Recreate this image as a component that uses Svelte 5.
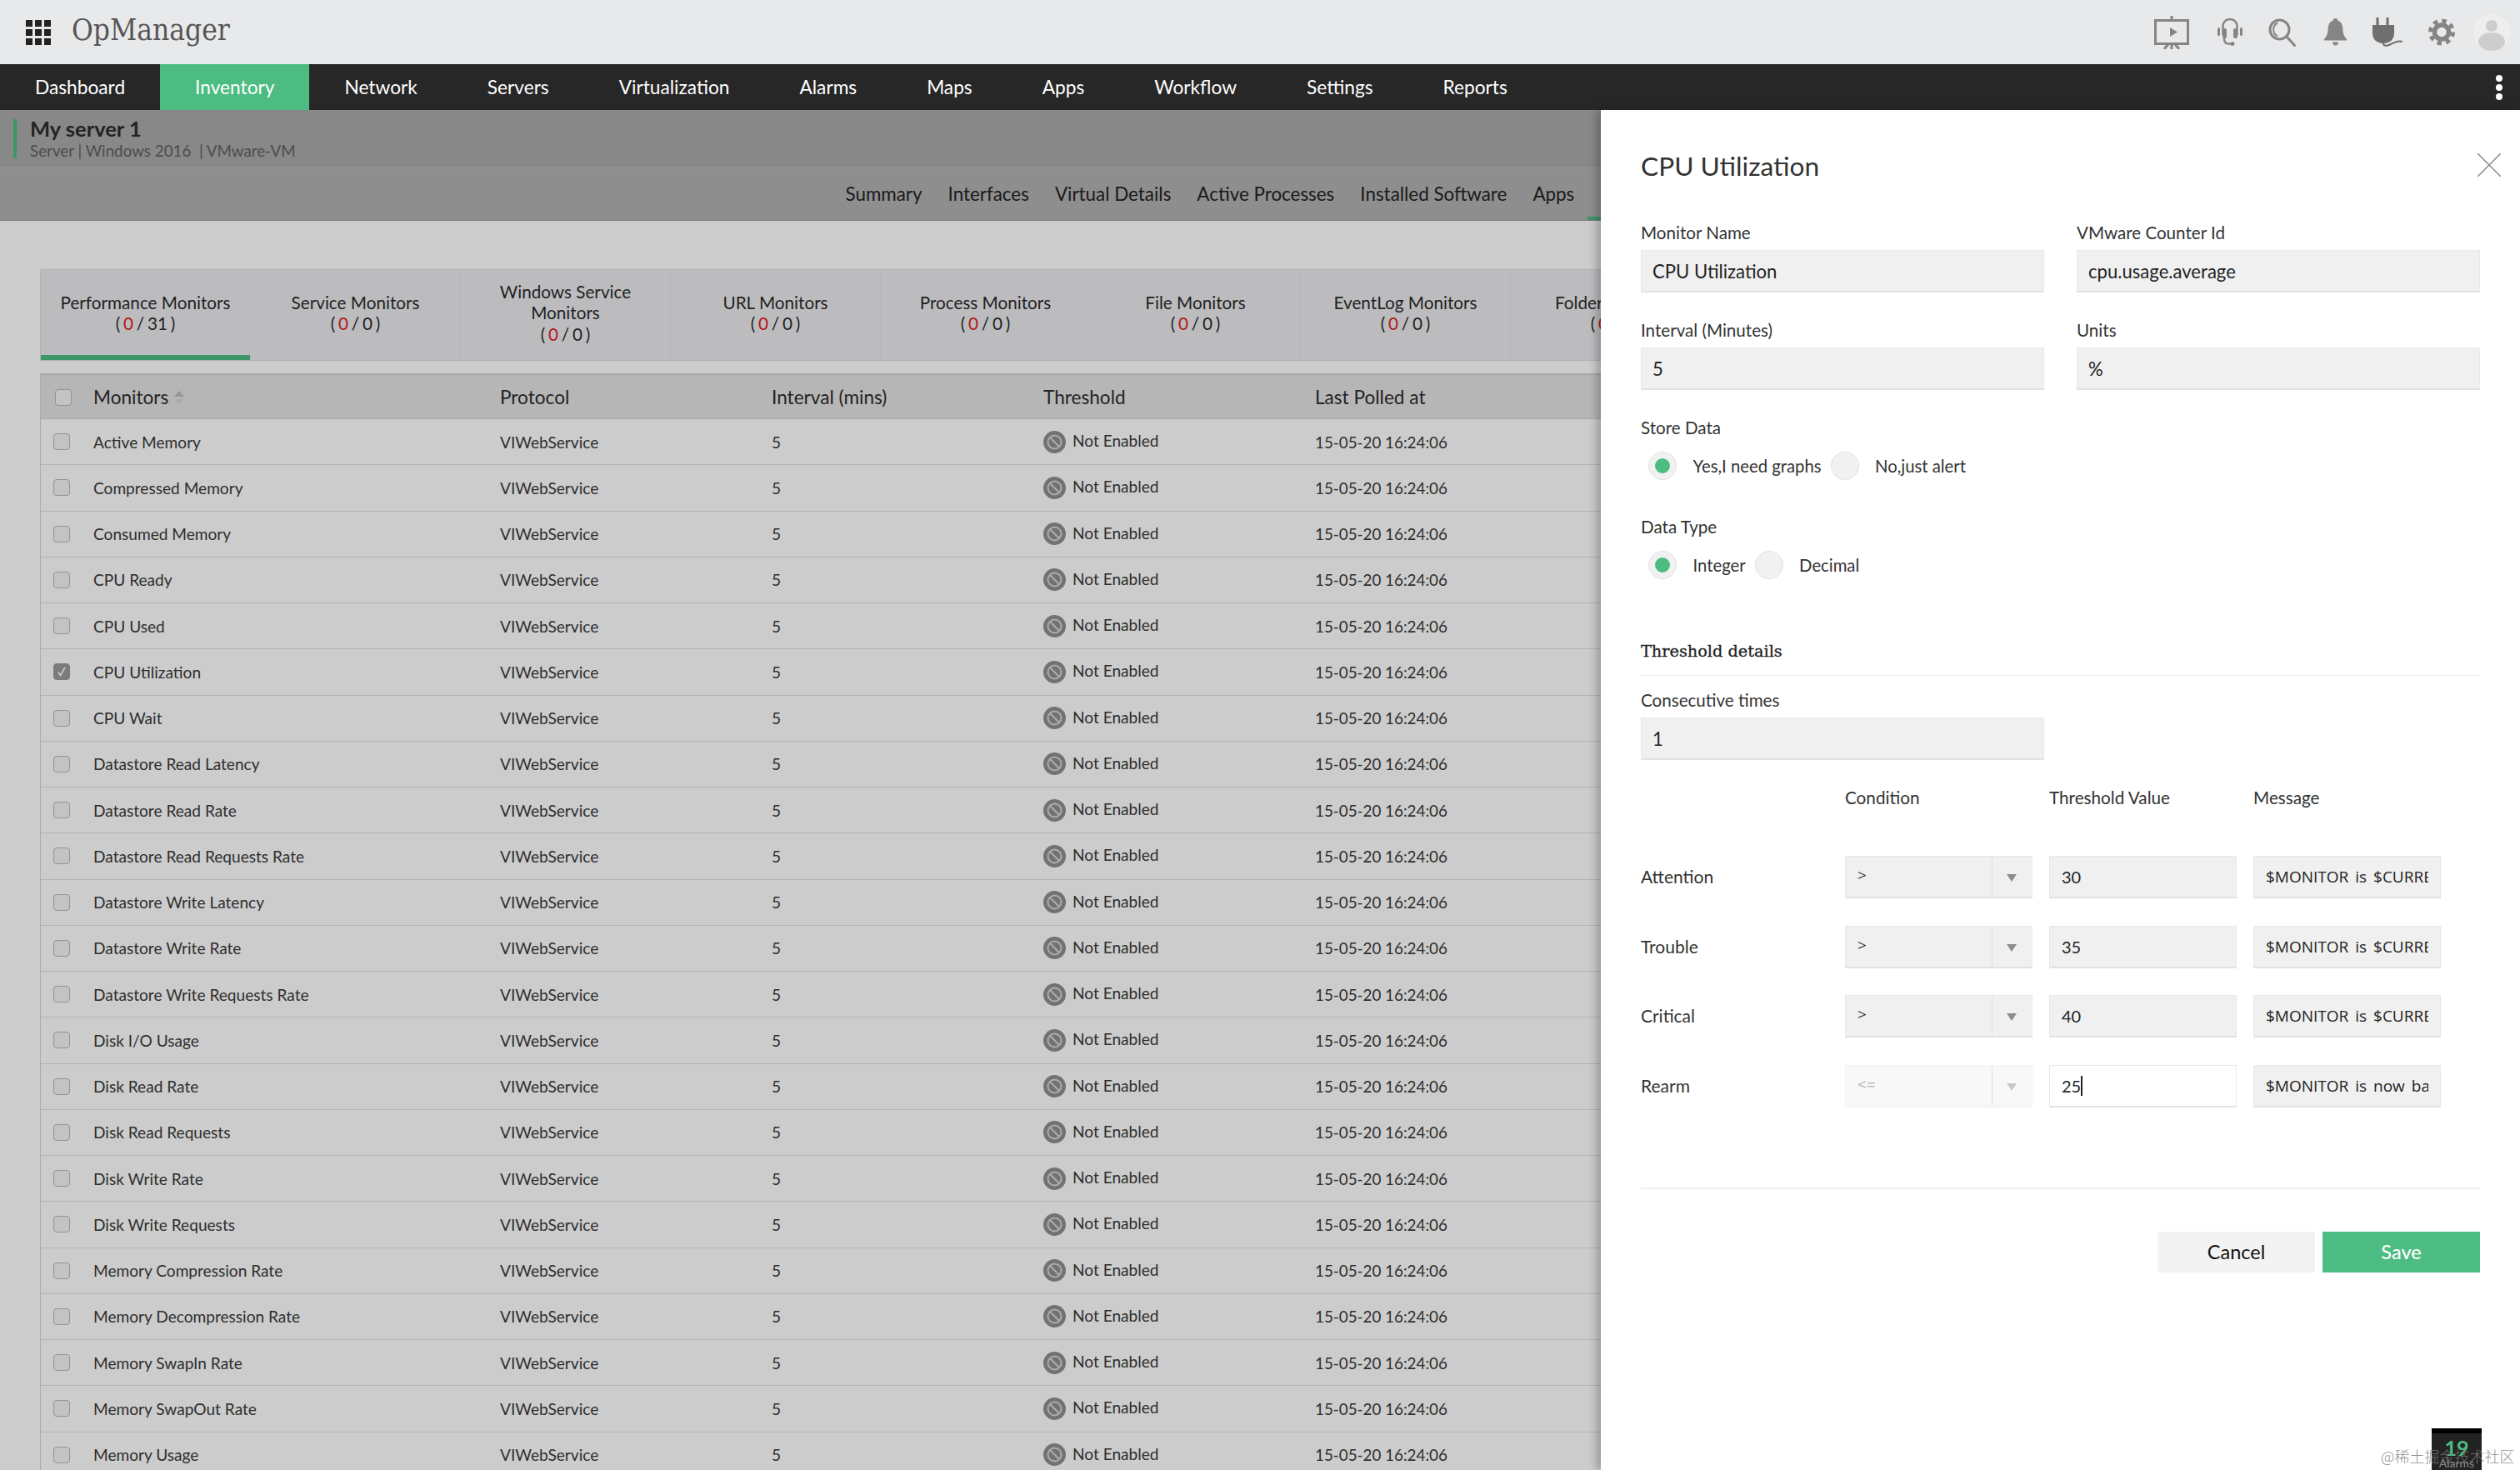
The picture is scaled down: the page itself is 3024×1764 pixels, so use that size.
<script>
  const navItems = ['Dashboard', 'Inventory', 'Network', 'Servers', 'Virtualization', 'Alarms', 'Maps', 'Apps', 'Workflow', 'Settings', 'Reports'];
  const subTabs = ['Summary', 'Interfaces', 'Virtual Details', 'Active Processes', 'Installed Software', 'Apps', 'Monitors'];
  const monitorTabs = [
    { lines: ['Performance Monitors'], total: 31 },
    { lines: ['Service Monitors'], total: 0 },
    { lines: ['Windows Service', 'Monitors'], total: 0 },
    { lines: ['URL Monitors'], total: 0 },
    { lines: ['Process Monitors'], total: 0 },
    { lines: ['File Monitors'], total: 0 },
    { lines: ['EventLog Monitors'], total: 0 },
    { lines: ['Folder Monitors'], total: 0 }
  ];
  const monitors = [
    'Active Memory', 'Compressed Memory', 'Consumed Memory', 'CPU Ready', 'CPU Used', 'CPU Utilization', 'CPU Wait',
    'Datastore Read Latency', 'Datastore Read Rate', 'Datastore Read Requests Rate', 'Datastore Write Latency',
    'Datastore Write Rate', 'Datastore Write Requests Rate', 'Disk I/O Usage', 'Disk Read Rate', 'Disk Read Requests',
    'Disk Write Rate', 'Disk Write Requests', 'Memory Compression Rate', 'Memory Decompression Rate',
    'Memory SwapIn Rate', 'Memory SwapOut Rate', 'Memory Usage'
  ];
  const thresholds = [
    { name: 'Attention', cond: '>', value: '30', message: '$MONITOR is $CURRENT_VALUE' },
    { name: 'Trouble', cond: '>', value: '35', message: '$MONITOR is $CURRENT_VALUE' },
    { name: 'Critical', cond: '>', value: '40', message: '$MONITOR is $CURRENT_VALUE' },
    { name: 'Rearm', cond: '<=', value: '25', message: '$MONITOR is now back to normal', rearm: true }
  ];
</script>

<div class="page">
  <header class="topbar">
    <div class="apps">
      {#each Array(9) as _}<span></span>{/each}
    </div>
    <div class="logo">OpManager</div>
    <div class="tools">
      <svg width="42" height="40" viewBox="0 0 42 40" fill="none" stroke="#858585" stroke-width="3">
        <rect x="1.5" y="5.5" width="39" height="28" />
        <path d="M21 0v5M21 34v6M12 40l5-6M30 40l-5-6" />
        <path d="M19 14v11l9-5.500z" fill="#858585" stroke="none" />
      </svg>
      <svg class="shift" width="30" height="34" viewBox="0 0 30 34" fill="none" stroke="#858585">
        <path d="M6.500 20V9.500a8.500 8.500 0 0 1 17 0V20" stroke-width="2.500" />
        <path d="M8 24c0 4 1.500 6.500 5 6.500h4" stroke-width="2.500" />
        <rect x="0" y="11" width="3" height="10" rx="1.500" fill="#858585" stroke="none" />
        <rect x="27" y="11" width="3" height="10" rx="1.500" fill="#858585" stroke="none" />
        <rect x="6" y="12" width="5" height="12" rx="2" fill="#858585" stroke="none" />
        <rect x="19" y="12" width="5" height="12" rx="2" fill="#858585" stroke="none" />
        <circle cx="18" cy="30.500" r="2.500" fill="#858585" stroke="none" />
      </svg>
      <svg width="33" height="34" viewBox="0 0 33 34" fill="none" stroke="#858585">
        <circle cx="13.500" cy="13.500" r="11.500" stroke-width="3" />
        <path d="M11 5.500a9 9 0 0 0 0 16" stroke-width="2" />
        <path d="M22 22l9.500 10.500" stroke-width="3" stroke-linecap="round" />
      </svg>
      <svg class="shift" width="27" height="33" viewBox="0 0 27 33" fill="#858585">
        <path d="M13.500 0c2 0 3 1.500 3.300 3 4 1.300 5.200 5 5.500 9 .3 5 1 9 4.700 13v1.500H0V25c3.700-4 4.400-8 4.700-13 .3-4 1.500-7.700 5.500-9 .3-1.500 1.300-3 3.300-3z" />
        <path d="M10 28.500h7c0 2.500-1.500 4-3.500 4s-3.500-1.500-3.500-4z" />
      </svg>
      <svg width="36" height="35" viewBox="0 0 36 35" fill="none">
        <path d="M6 0v9M18 0v9" stroke="#6f6f6f" stroke-width="3" />
        <path d="M0 9h26v10c0 7-5 12-13 12S0 26 0 19z" fill="#6f6f6f" />
        <path d="M13 31c0 4 5 3 9 1s8-5 14-3" stroke="#6f6f6f" stroke-width="2" />
      </svg>
      <svg width="32" height="33" viewBox="0 0 32 33" fill="none" stroke="#858585">
        <circle cx="16" cy="16.500" r="13.500" stroke-width="5" stroke-dasharray="5.300 5.300" />
        <circle cx="16" cy="16.500" r="8.500" stroke-width="5.500" />
      </svg>
      <svg class="avatar" width="44" height="44" viewBox="0 0 44 44">
        <circle cx="22" cy="22" r="22" fill="#eeeeef" />
        <circle cx="22" cy="14" r="7" fill="#cdcdcd" />
        <ellipse cx="22" cy="33" rx="16" ry="11" fill="#cdcdcd" />
      </svg>
    </div>
  </header>

  <nav class="mainnav">
    {#each navItems as item}
      <span class="navitem" class:active={item === 'Inventory'}>{item}</span>
    {/each}
    <span class="more"><i></i><i></i><i></i></span>
  </nav>

  <main class="content">
    <section class="device">
      <div class="device-name">My server 1</div>
      <div class="device-meta">Server | Windows 2016 &nbsp;| VMware-VM</div>
    </section>
    <div class="subtabs">
      {#each subTabs as tab}
        <span class="subtab" class:current={tab === 'Monitors'}>{tab}</span>
      {/each}
    </div>

    <div class="monitors">
      <div class="tabcard">
        {#each monitorTabs as tab, i}
          <div class="mtab" class:current={i === 0}>
            {#each tab.lines as line}<div>{line}</div>{/each}
            <div class="count">( <b>0</b> / {tab.total} )</div>
          </div>
        {/each}
      </div>

      <div class="table">
        <div class="row head">
          <span class="box"></span>
          <span class="sortable">Monitors<i class="sort"></i></span>
          <span>Protocol</span>
          <span>Interval (mins)</span>
          <span>Threshold</span>
          <span>Last Polled at</span>
        </div>
        {#each monitors as name}
          <div class="row">
            <span class="box" class:checked={name === 'CPU Utilization'}>
              {#if name === 'CPU Utilization'}
                <svg width="14" height="14" viewBox="0 0 14 14" fill="none" stroke="#fff" stroke-width="1.600"><path d="M3 7.500l2.500 4L11 2" /></svg>
              {/if}
            </span>
            <span>{name}</span>
            <span>VIWebService</span>
            <span>5</span>
            <span class="status">
              <svg width="27" height="27" viewBox="0 0 27 27" fill="none">
                <circle cx="13.500" cy="13.500" r="13.500" fill="#8f8f8f" />
                <circle cx="13.500" cy="13.500" r="8" stroke="#d8d8d8" stroke-width="2" />
                <path d="M8 8l11 11" stroke="#d8d8d8" stroke-width="2" />
              </svg>
              <span>Not Enabled</span>
            </span>
            <span class="polled">15-05-20 16:24:06</span>
          </div>
        {/each}
      </div>
    </div>
    <div class="scrim"></div>
  </main>

  <aside class="panel">
    <svg class="close" width="28" height="28" viewBox="0 0 28 28" stroke="#8a8a8a" stroke-width="1.500"><path d="M0 0l28 28M28 0L0 28" /></svg>
    <h1>CPU Utilization</h1>

    <div class="fields">
      <div>
        <div class="label">Monitor Name</div>
        <div class="input">CPU Utilization</div>
      </div>
      <div>
        <div class="label">VMware Counter Id</div>
        <div class="input">cpu.usage.average</div>
      </div>
      <div>
        <div class="label">Interval (Minutes)</div>
        <div class="input">5</div>
      </div>
      <div>
        <div class="label">Units</div>
        <div class="input">%</div>
      </div>
    </div>

    <div class="label store">Store Data</div>
    <div class="radios">
      <span class="radio on"></span><span class="radio-text">Yes,I need graphs</span>
      <span class="radio"></span><span class="radio-text">No,just alert</span>
    </div>

    <div class="label datatype">Data Type</div>
    <div class="radios">
      <span class="radio on"></span><span class="radio-text">Integer</span>
      <span class="radio"></span><span class="radio-text">Decimal</span>
    </div>

    <h2>Threshold details</h2>
    <div class="consecutive">
      <div class="label">Consecutive times</div>
      <div class="input">1</div>
    </div>

    <div class="thead">
      <span></span>
      <span>Condition</span>
      <span>Threshold Value</span>
      <span>Message</span>
    </div>
    <div class="tgrid">
      {#each thresholds as t}
        <span class="tname">{t.name}</span>
        <div class="select" class:disabled={t.rearm}>
          <span class="select-value">{t.cond}</span>
          <span class="select-arrow"></span>
        </div>
        <div class="input small" class:focused={t.rearm}>{t.value}{#if t.rearm}<i class="caret"></i>{/if}</div>
        <div class="input small message"><span>{t.message}</span></div>
      {/each}
    </div>

    <div class="actions">
      <button class="cancel">Cancel</button>
      <button class="save">Save</button>
    </div>
  </aside>

  <div class="alarms">
    <strong>19</strong>
    <span>Alarms</span>
  </div>
  <div class="watermark">@稀土掘金技术社区</div>
</div>

<style>
  :global(body) {
    margin: 0;
    background: #fff;
  }

  .page {
    position: relative;
    width: 3024px;
    height: 1764px;
    overflow: hidden;
    font-family: Lato, "Noto Sans", sans-serif;
    color: #333;
  }

  .topbar {
    display: flex;
    align-items: center;
    height: 77px;
    padding: 0 12px 0 31px;
    box-sizing: border-box;
    background: #e8e9eb;
  }

  .apps {
    display: grid;
    grid-template-columns: repeat(3, 8px);
    grid-auto-rows: 8px;
    gap: 3px;
    margin-right: 25px;
  }

  .apps span {
    background: #222;
  }

  .logo {
    font-family: "DejaVu Serif Condensed", "DejaVu Serif", serif;
    font-size: 35px;
    color: #555;
    line-height: 1;
    margin-top: -4px;
  }

  .tools {
    display: flex;
    align-items: center;
    gap: 31px;
    margin-left: auto;
  }

  .tools .shift {
    margin-left: 3px;
  }

  .tools .avatar {
    margin-left: -9px;
  }

  .mainnav {
    display: flex;
    align-items: stretch;
    height: 55px;
    background: #272727;
    color: #fff;
    font-size: 22.700px;
  }

  .navitem {
    display: flex;
    align-items: center;
    padding: 0 42px 1px;
  }

  .navitem.active {
    background: #4cbc82;
  }

  .more {
    display: flex;
    flex-direction: column;
    justify-content: center;
    gap: 3px;
    margin-left: auto;
    padding-right: 21px;
  }

  .more i {
    width: 8px;
    height: 8px;
    border-radius: 50%;
    background: #fff;
  }

  .content {
    position: relative;
    height: 1632px;
    overflow: hidden;
    background: #fff;
  }

  .device {
    height: 70px;
    padding: 8px 0 0 36px;
    box-sizing: border-box;
    position: relative;
    background: #ababab;
    border-bottom: 1px solid #b9b9b9;
  }

  .device::before {
    content: "";
    position: absolute;
    left: 16px;
    top: 11px;
    width: 4px;
    height: 47px;
    background: #4cbc82;
  }

  .device-name {
    font-size: 25.500px;
    line-height: 28px;
    font-weight: 700;
    color: #2c2c2c;
  }

  .device-meta {
    font-size: 18.800px;
    line-height: 26px;
    color: #606060;
  }

  .subtabs {
    display: flex;
    height: 63px;
    padding-left: 999px;
    box-sizing: border-box;
    background: #b2b2b2;
    border-bottom: 1px solid #9a9a9a;
    font-size: 22.400px;
    color: #222;
  }

  .subtab {
    display: flex;
    align-items: center;
    padding: 0 15.500px 1px;
    box-sizing: border-box;
  }

  .subtab.current {
    border-bottom: 4px solid #4cbc82;
  }

  .monitors {
    padding: 58px 0 0 48px;
  }

  .tabcard {
    display: flex;
    height: 110px;
    box-sizing: border-box;
    background: #ececef;
    border: 1px solid #dcdcdc;
    font-size: 20.700px;
    line-height: 25.500px;
    color: #2a2a2a;
  }

  .mtab {
    flex: 0 0 252px;
    display: flex;
    flex-direction: column;
    align-items: center;
    justify-content: center;
    padding-bottom: 4px;
    box-sizing: border-box;
    border-right: 1px solid #e4e4e7;
  }

  .mtab.current {
    box-shadow: inset 0 -6px 0 #4cbc82;
  }

  .count {
    word-spacing: -1.500px;
  }

  .count b {
    font-weight: 400;
    color: #e01b1b;
  }

  .table {
    margin-top: 15px;
    border-left: 1px solid #d8d8d8;
    border-top: 2px solid #d4d4d4;
  }

  .row {
    display: grid;
    grid-template-columns: 63px 488px 326px 326px 326px 1fr;
    align-items: center;
    height: 55.250px;
    box-sizing: border-box;
    border-bottom: 1px solid #e0e0e0;
    font-size: 19.100px;
    color: #3a3a3a;
  }

  .row.head {
    height: 53px;
    padding-top: 1px;
    background: #e4e4e4;
    border-bottom: 1px solid #d2d2d2;
    font-size: 22.600px;
    color: #2c2c2c;
  }

  .polled {
    font-size: 18.800px;
  }

  .box {
    display: flex;
    align-items: center;
    justify-content: center;
    width: 20px;
    height: 20px;
    margin-left: 15px;
    box-sizing: border-box;
    border: 1px solid #b8b8b8;
    border-radius: 4px;
    background: #f4f4f4;
  }

  .head .box {
    margin-left: 17px;
  }

  .box.checked {
    background: #9c9c9c;
    border-color: #9c9c9c;
  }

  .sortable {
    display: flex;
    align-items: center;
  }

  .sort {
    position: relative;
    width: 12px;
    height: 16px;
    margin-left: 7px;
  }

  .sort::before {
    content: "";
    position: absolute;
    top: 0;
    left: 0;
    border: 6px solid transparent;
    border-top: 0;
    border-bottom: 7px solid #bdbdbd;
  }

  .sort::after {
    content: "";
    position: absolute;
    bottom: 0;
    left: 0;
    border: 6px solid transparent;
    border-bottom: 0;
    border-top: 6px solid #d6d6d6;
  }

  .status {
    display: flex;
    align-items: center;
    gap: 8px;
  }

  .status span {
    margin-top: -3px;
  }

  .scrim {
    position: absolute;
    inset: 0;
    background: rgba(0, 0, 0, 0.2);
  }

  .panel {
    position: absolute;
    top: 132px;
    left: 1921px;
    bottom: 0;
    width: 1103px;
    padding: 47px 48px 0;
    box-sizing: border-box;
    background: #fff;
    box-shadow: -5px 0 10px rgba(0, 0, 0, 0.25);
    color: #333;
  }

  .close {
    position: absolute;
    top: 52px;
    right: 23px;
  }

  h1 {
    margin: 0 0 47px;
    font-size: 31.700px;
    line-height: 40px;
    font-weight: 400;
  }

  h2 {
    margin: 74px 0 16px;
    padding-bottom: 15px;
    border-bottom: 1px solid #ececec;
    font-family: "DejaVu Serif", serif;
    font-size: 19.300px;
    line-height: 26px;
    font-weight: 400;
    color: #222;
    -webkit-text-stroke: 0.3px #222;
  }

  .fields {
    display: grid;
    grid-template-columns: 484px 484px;
    column-gap: 39px;
    row-gap: 32px;
  }

  .label {
    margin-bottom: 8px;
    font-size: 20.600px;
    line-height: 26px;
  }

  .input {
    display: flex;
    align-items: center;
    height: 51px;
    padding: 0 13px;
    box-sizing: border-box;
    background: #f0f0f0;
    border: 1px solid #e8e8e8;
    border-bottom: 2px solid #e2e2e2;
    font-size: 22.100px;
    color: #222;
  }

  .store {
    margin: 32px 0 16px;
  }

  .datatype {
    margin: 43px 0 16px;
  }

  .radios {
    display: flex;
    align-items: center;
    height: 34px;
    padding-left: 9px;
    font-size: 20.300px;
  }

  .radio {
    position: relative;
    width: 34px;
    height: 34px;
    box-sizing: border-box;
    border: 1px solid #e2e2e2;
    border-radius: 50%;
    background: #f1f1f1;
  }

  .radio.on::after {
    content: "";
    position: absolute;
    inset: 7px;
    border-radius: 50%;
    background: #4cbc82;
  }

  .radio-text {
    margin: 0 11px 0 19.500px;
  }

  .consecutive {
    width: 484px;
  }

  .thead,
  .tgrid {
    display: grid;
    grid-template-columns: 225px 225px 225px 225px;
    column-gap: 20px;
    width: 960px;
  }

  .thead {
    margin: 32px 0 57px;
    font-size: 20.700px;
    line-height: 26px;
  }

  .tgrid {
    row-gap: 32.500px;
    align-items: center;
  }

  .tname {
    font-size: 21px;
    margin-top: -2px;
  }

  .input.small {
    padding: 0 14px;
    font-size: 20px;
  }

  .input.focused {
    background: #fff;
  }

  .caret {
    width: 2px;
    height: 24px;
    background: #222;
  }

  .message {
    font-family: "Open Sans", sans-serif;
    font-size: 19px !important;
    word-spacing: 3px;
  }

  .message span {
    overflow: hidden;
    white-space: nowrap;
  }

  .select {
    display: flex;
    height: 51px;
    box-sizing: border-box;
    background: #f0f0f0;
    border: 1px solid #e8e8e8;
    border-bottom: 2px solid #e2e2e2;
    font-family: "Open Sans", sans-serif;
    font-size: 19px;
    color: #333;
  }

  .select.disabled {
    background: #f8f8f8;
    border-color: #f3f3f3;
    color: #b0b0b0;
  }

  .select-value {
    flex: 1;
    padding: 9px 0 0 14px;
  }

  .select-arrow {
    position: relative;
    width: 47px;
    border-left: 1px solid #e0e0e0;
  }

  .select-arrow::after {
    content: "";
    position: absolute;
    top: 21px;
    left: 17px;
    border: 6.500px solid transparent;
    border-bottom: 0;
    border-top: 9px solid #8c8c8c;
  }

  .disabled .select-arrow::after {
    border-top-color: #c8c8c8;
  }

  .actions {
    display: flex;
    justify-content: flex-end;
    gap: 9px;
    margin-top: 96px;
    padding-top: 51px;
    border-top: 2px solid #efefef;
  }

  .actions button {
    width: 189px;
    height: 49px;
    border: 0;
    padding: 0;
    font-family: inherit;
    font-size: 23.500px;
  }

  .cancel {
    background: #f3f3f3;
    color: #111;
  }

  .save {
    background: #4cbc82;
    color: #fff;
    font-weight: 500;
  }

  .alarms {
    position: absolute;
    left: 2918px;
    top: 1714px;
    bottom: 0;
    width: 60px;
    box-sizing: border-box;
    display: flex;
    flex-direction: column;
    align-items: center;
    background: #232323;
    border-top: 6px solid #000;
  }

  .alarms strong {
    font-size: 25px;
    line-height: 26px;
    margin-top: 4px;
    color: #4cbc82;
  }

  .alarms span {
    font-size: 14px;
    line-height: 12px;
    color: #8a8a8a;
  }

  .watermark {
    position: absolute;
    left: 2857px;
    top: 1734px;
    font-family: "Noto Sans CJK SC", sans-serif;
    font-size: 18px;
    line-height: 26px;
    font-weight: 300;
    color: rgba(125, 125, 125, 0.85);
    white-space: nowrap;
  }
</style>
